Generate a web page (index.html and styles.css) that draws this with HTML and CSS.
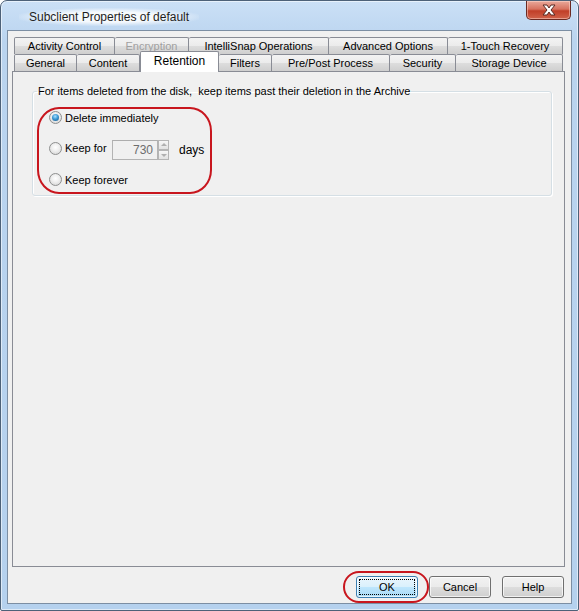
FILE: index.html
```html
<!DOCTYPE html>
<html lang="en">

<head>
    <meta charset="UTF-8">
    <title>Subclient Properties of default</title>
    <link rel="stylesheet" href="styles.css">
</head>

<body>
    <div class="window">
        <div class="titlebar">
            <span class="title">Subclient Properties of default</span>
            <div class="close">
                <svg width="16" height="12" viewBox="0 0 16 12">
                    <path d="M2 1 L6 1 L8 4 L10 1 L14 1 L10 6 L14 11 L10 11 L8 8 L6 11 L2 11 L6 6 Z"
                        fill="#fff" stroke="#5a2a22" stroke-width="1" stroke-linejoin="round" />
                </svg>
            </div>
        </div>

        <div class="client">
            <div class="tabs">
                <div class="tab-row">
                    <div class="tab" style="width: 101px">Activity Control</div>
                    <div class="tab disabled" style="width: 74px">Encryption</div>
                    <div class="tab" style="width: 140px">IntelliSnap Operations</div>
                    <div class="tab" style="width: 119px">Advanced Options</div>
                    <div class="tab" style="width: 115px">1-Touch Recovery</div>
                </div>
                <div class="tab-row">
                    <div class="tab" style="width: 63px">General</div>
                    <div class="tab" style="width: 63px">Content</div>
                    <div class="tab selected" style="width: 79px">Retention</div>
                    <div class="tab" style="width: 53px">Filters</div>
                    <div class="tab" style="width: 118px">Pre/Post Process</div>
                    <div class="tab" style="width: 66px">Security</div>
                    <div class="tab" style="width: 107px">Storage Device</div>
                </div>
            </div>

            <div class="panel">
                <fieldset class="group">
                    <legend>For items deleted from the disk,  keep items past their deletion in the Archive</legend>
                    <div class="options">
                        <div class="option">
                            <span class="radio checked"></span>
                            <span>Delete immediately</span>
                        </div>
                        <div class="option">
                            <span class="radio"></span>
                            <span class="keep-label">Keep for</span>
                            <div class="spin">
                                <div class="spin-value">730</div>
                                <div class="spin-arrows">
                                    <div class="arrow up"></div>
                                    <div class="arrow down"></div>
                                </div>
                            </div>
                            <span class="days">days</span>
                        </div>
                        <div class="option">
                            <span class="radio"></span>
                            <span>Keep forever</span>
                        </div>
                    </div>
                    <div class="mark mark-options"></div>
                </fieldset>
            </div>

            <div class="buttons">
                <div class="btn-wrap">
                    <button type="button" class="btn default"><span class="focus">OK</span></button>
                    <div class="mark mark-ok"></div>
                </div>
                <button type="button" class="btn">Cancel</button>
                <button type="button" class="btn">Help</button>
            </div>
        </div>
    </div>
</body>

</html>
```

FILE: styles.css
```css
body {
    margin: 0;
    background: #ffffff;
    font-family: "Liberation Sans", Arial, sans-serif;
    font-size: 11px;
    color: #000;
}

.window {
    width: 579px;
    height: 611px;
    box-sizing: border-box;
    border: 1px solid #4d6178;
    border-radius: 7px 7px 2px 2px;
    padding: 0 6px 6px 6px;
    background: linear-gradient(to bottom, #cbe0f6 0px, #bad4ef 40px, #b5d1ee 100%);
    box-shadow: inset 0 0 0 1px rgba(255, 255, 255, 0.55);
}

.titlebar {
    height: 29px;
    display: flex;
    align-items: flex-start;
}

.title {
    margin: 7px 0 0 12px;
    padding: 1px 10px 1px 10px;
    font-size: 12px;
    line-height: 16px;
    color: #1e1e1e;
    background: radial-gradient(ellipse at center, rgba(255, 255, 255, 0.85) 40%, rgba(255, 255, 255, 0) 75%);
}

.close {
    margin-left: auto;
    margin-right: 1px;
    width: 45px;
    height: 19px;
    box-sizing: border-box;
    border: 1px solid #6b2a22;
    border-top: none;
    border-radius: 0 0 5px 5px;
    background: linear-gradient(to bottom, #e9a99b 0%, #d7725f 45%, #c13f28 55%, #d0624a 100%);
    display: flex;
    align-items: center;
    justify-content: center;
    box-shadow: inset 0 0 0 1px rgba(255, 220, 210, 0.5);
}

.client {
    height: 574px;
    box-sizing: border-box;
    border: 1px solid #7c8ea3;
    background: #f0f0f0;
    padding: 6px 6px 5px 4px;
    display: flex;
    flex-direction: column;
}

.tabs {
    margin-left: 2px;
}

.tab-row {
    display: flex;
    height: 17px;
}

.tab {
    height: 17px;
    box-sizing: border-box;
    border: 1px solid #898c95;
    border-bottom: none;
    border-radius: 2px 2px 0 0;
    background: linear-gradient(to bottom, #f3f3f3 0%, #ebebeb 50%, #dddddd 51%, #cfcfcf 100%);
    text-align: center;
    line-height: 16px;
    white-space: nowrap;
}

.tab + .tab {
    border-left: none;
}

.tab.disabled {
    color: #a0a0a0;
}

.tab.selected {
    position: relative;
    z-index: 1;
    height: 21px;
    margin-top: -3px;
    border-left: 1px solid #898c95;
    background: #ffffff;
    font-size: 12px;
    line-height: 18px;
}

.tab.selected + .tab {
    border-left: none;
}

.panel {
    height: 496px;
    width: 553px;
    box-sizing: border-box;
    border: 1px solid #898c95;
    background: #f0f0f0;
    padding: 13px 0 0 19px;
}

.group {
    margin: 0;
    width: 520px;
    box-sizing: border-box;
    height: 111px;
    border: 1px solid #d5dfe5;
    border-radius: 3px;
    box-shadow: 1px 1px 0 #ffffff, inset 1px 1px 0 #ffffff;
    padding: 0 0 0 16px;
    position: relative;
}

.group legend {
    margin-left: -12px;
    padding: 0 1px;
    line-height: 13px;
    white-space: pre;
}

.options {
    padding-top: 4px;
}

.option {
    height: 31px;
    display: flex;
    align-items: center;
}

.radio {
    width: 13px;
    height: 13px;
    box-sizing: border-box;
    border: 1px solid #8e8f8f;
    border-radius: 50%;
    background: radial-gradient(circle at 50% 40%, #ffffff 0%, #f0f0f0 40%, #cfcfcf 100%);
    margin-right: 3px;
    position: relative;
    flex-shrink: 0;
}

.radio.checked::after {
    content: "";
    position: absolute;
    left: 2px;
    top: 2px;
    width: 7px;
    height: 7px;
    border-radius: 50%;
    background: radial-gradient(circle at 45% 35%, #a8e0ff 0%, #3b9ad6 45%, #144f80 100%);
}

.keep-label {
    width: 47px;
    margin-top: -2px;
}

.spin {
    display: flex;
    height: 20px;
    margin-top: 2px;
}

.spin-value {
    width: 46px;
    height: 20px;
    box-sizing: border-box;
    border: 1px solid #b3b3b3;
    border-top-color: #adadad;
    background: #f0f0f0;
    color: #6d6d6d;
    text-align: right;
    padding-right: 4px;
    font-size: 12px;
    line-height: 18px;
}

.spin-arrows {
    width: 11px;
    display: flex;
    flex-direction: column;
}

.arrow {
    height: 10px;
    box-sizing: border-box;
    border: 1px solid #b5b5b5;
    background: linear-gradient(to bottom, #f7f7f7, #e2e2e2);
    position: relative;
}

.arrow::after {
    content: "";
    position: absolute;
    left: 2px;
    top: 2px;
    border-left: 3px solid transparent;
    border-right: 3px solid transparent;
}

.arrow.up::after {
    border-bottom: 3px solid #b0b0b0;
}

.arrow.down::after {
    border-top: 3px solid #b0b0b0;
    top: 3px;
}

.days {
    margin-left: 10px;
    font-size: 12px;
    margin-top: 3px;
}

.mark {
    position: absolute;
    border: 2px solid #c8161e;
    box-sizing: border-box;
    pointer-events: none;
}

.mark-options {
    left: 4px;
    top: 9px;
    width: 175px;
    height: 87px;
    border-radius: 22px / 24px;
}

.buttons {
    margin-top: 9px;
    display: flex;
    justify-content: flex-end;
    gap: 11px;
    padding-right: 1px;
}

.btn-wrap {
    position: relative;
}

.btn {
    width: 62px;
    height: 22px;
    box-sizing: border-box;
    border: 1px solid #707070;
    border-radius: 3px;
    background: linear-gradient(to bottom, #f2f2f2 0%, #ebebeb 50%, #dddddd 51%, #cfcfcf 100%);
    font-family: "Liberation Sans", Arial, sans-serif;
    font-size: 11px;
    color: #000;
    padding: 0;
    box-shadow: inset 0 0 0 1px rgba(255, 255, 255, 0.7);
}

.btn.default {
    border-color: #3c7fb1;
    background: linear-gradient(to bottom, #eaf6fd 0%, #d9f0fc 50%, #bee6fd 51%, #a7d9f5 100%);
    padding: 2px;
}

.focus {
    display: block;
    height: 16px;
    line-height: 15px;
    box-sizing: border-box;
    border: 1px dotted #000;
}

.mark-ok {
    left: -13px;
    top: -5px;
    width: 86px;
    height: 32px;
    border-radius: 16px;
}
```
